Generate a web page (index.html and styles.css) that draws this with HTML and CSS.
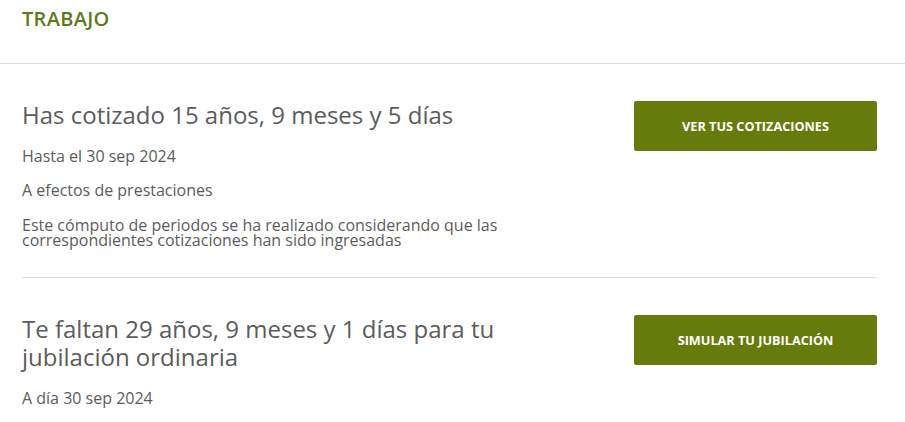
FILE: index.html
```html
<!DOCTYPE html>
<html lang="es">
<head>
<meta charset="utf-8">
<title>Trabajo</title>
<link rel="stylesheet" href="styles.css">
</head>
<body>
<header class="panel-header">
  <h2 class="panel-title">TRABAJO</h2>
</header>
<main class="panel-body">
  <section class="row">
    <div class="info">
      <h3 class="headline">Has cotizado 15 años, 9 meses y 5 días</h3>
      <p class="meta">Hasta el 30 sep 2024</p>
      <p class="meta">A efectos de prestaciones</p>
      <p class="note">Este cómputo de periodos se ha realizado considerando que las correspondientes cotizaciones han sido ingresadas</p>
    </div>
    <a class="btn" href="#">VER TUS COTIZACIONES</a>
  </section>
  <section class="row">
    <div class="info">
      <h3 class="headline">Te faltan 29 años, 9 meses y 1 días para tu jubilación ordinaria</h3>
      <p class="meta">A día 30 sep 2024</p>
    </div>
    <a class="btn" href="#">SIMULAR TU JUBILACIÓN</a>
  </section>
</main>
</body>
</html>
```
FILE: styles.css
```css
* { box-sizing: border-box; }
html, body { margin: 0; padding: 0; background: #fff; }
body {
  font-family: "Open Sans", "Noto Sans", "Liberation Sans", sans-serif;
  color: #5c5c5c;
}
.panel-header {
  height: 64px;
  padding: 6px 22px 0;
  border-bottom: 1px solid #dddddd;
}
.panel-title {
  margin: 0;
  font-size: 20px;
  line-height: 26px;
  font-weight: 600;
  color: #5b7a1c;
  letter-spacing: 0.3px;
}
.panel-body {
  padding: 0 28px 0 22px;
}
.row {
  display: flex;
  justify-content: space-between;
  align-items: flex-start;
  padding: 37px 0 29px;
  border-bottom: 1px solid #dddddd;
}
.row:last-child { border-bottom: none; }
.info { max-width: 540px; }
.headline {
  margin: 0 0 17px;
  font-size: 24px;
  line-height: 28px;
  font-weight: 400;
  color: #5c5c5c;
}
.meta {
  margin: 0 0 14px;
  font-size: 16px;
  line-height: 20px;
}
.meta:last-child { margin-bottom: 0; }
.note {
  margin: 18px 0 0;
  font-size: 16px;
  line-height: 15px;
}
.btn {
  flex: 0 0 243px;
  height: 50px;
  display: flex;
  align-items: center;
  justify-content: center;
  background: #667b0b;
  color: #ffffff;
  border-radius: 2px;
  text-decoration: none;
  font-size: 12.7px;
  font-weight: 700;
}
```
